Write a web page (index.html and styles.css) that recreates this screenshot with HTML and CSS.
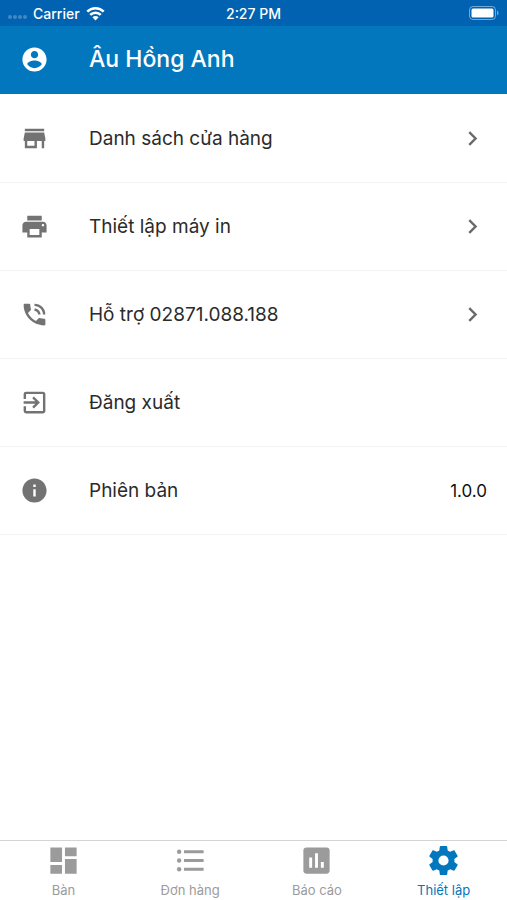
FILE: index.html
```html
<!DOCTYPE html>
<html lang="vi">
<head>
<meta charset="utf-8">
<meta name="viewport" content="width=device-width, initial-scale=1">
<title>Thiết lập</title>
<link rel="stylesheet" href="styles.css">
</head>
<body>
<div class="status-bar">
  <div class="carrier">
    <span class="signal"><i></i><i></i><i></i><i></i></span>
    <span>Carrier</span>
    <svg class="wifi" viewBox="0 0 18 14" aria-hidden="true"><path d="M1.2 5.2a11 11 0 0 1 15.6 0M4 8.3a7 7 0 0 1 10 0" fill="none" stroke="currentColor" stroke-width="2.4"/><path d="M9 13.6L6.1 10.6a4.1 4.1 0 0 1 5.8 0z" fill="currentColor"/></svg>
  </div>
  <time>2:27 PM</time>
  <div class="battery">
    <svg viewBox="0 0 30 14" aria-hidden="true"><rect x=".5" y=".5" width="26" height="13" rx="3.5" fill="none" stroke="currentColor" opacity=".45"/><rect x="2.5" y="2.5" width="22" height="9" rx="1.5" fill="currentColor"/><path d="M28 4.5q1.6.9 1.6 2.5T28 9.500z" fill="currentColor" opacity=".45"/></svg>
  </div>
</div>
<header class="header">
  <svg class="icon" viewBox="0 0 24 24" aria-hidden="true"><path d="M12 2C6.480 2 2 6.480 2 12s4.480 10 10 10 10-4.480 10-10S17.520 2 12 2zm0 3c1.660 0 3 1.340 3 3s-1.340 3-3 3-3-1.340-3-3 1.340-3 3-3zm0 14.200c-2.500 0-4.710-1.280-6-3.220.03-1.990 4-3.080 6-3.080 1.990 0 5.970 1.090 6 3.080-1.290 1.940-3.500 3.220-6 3.220z"/></svg>
  <h1>Âu Hồng Anh</h1>
</header>
<main class="list">
  <a class="row" href="#stores">
    <svg class="icon" viewBox="0 0 24 24" aria-hidden="true"><path d="M20 4H4v2h16V4zm1 10v-2l-1-5H4l-1 5v2h1v6h10v-6h4v6h2v-6h1zm-9 4H6v-4h6v4z"/></svg>
    <span class="label">Danh sách cửa hàng</span>
    <svg class="chevron" viewBox="0 0 24 24" aria-hidden="true"><path d="M10 6L8.590 7.410 13.170 12l-4.580 4.590L10 18l6-6z"/></svg>
  </a>
  <a class="row" href="#printer">
    <svg class="icon" viewBox="0 0 24 24" aria-hidden="true"><path d="M19 8H5c-1.660 0-3 1.340-3 3v6h4v4h12v-4h4v-6c0-1.660-1.340-3-3-3zm-3 11H8v-5h8v5zm3-7c-.55 0-1-.45-1-1s.45-1 1-1 1 .45 1 1-.45 1-1 1zm-1-9H6v4h12V3z"/></svg>
    <span class="label">Thiết lập máy in</span>
    <svg class="chevron" viewBox="0 0 24 24" aria-hidden="true"><path d="M10 6L8.590 7.410 13.170 12l-4.580 4.590L10 18l6-6z"/></svg>
  </a>
  <a class="row" href="tel:02871088188">
    <svg class="icon" viewBox="0 0 24 24" aria-hidden="true"><path d="M20 15.500c-1.250 0-2.450-.2-3.570-.57a1.020 1.020 0 0 0-1.020.24l-2.200 2.200a15.045 15.045 0 0 1-6.590-6.590l2.200-2.210c.28-.26.36-.65.25-1C8.700 6.450 8.500 5.250 8.500 4c0-.55-.45-1-1-1H4c-.55 0-1 .45-1 1 0 9.390 7.610 17 17 17 .55 0 1-.45 1-1v-3.500c0-.55-.45-1-1-1zM19 12h2a9 9 0 0 0-9-9v2c3.870 0 7 3.130 7 7zm-4 0h2c0-2.760-2.240-5-5-5v2c1.660 0 3 1.340 3 3z"/></svg>
    <span class="label">Hỗ trợ 02871.088.188</span>
    <svg class="chevron" viewBox="0 0 24 24" aria-hidden="true"><path d="M10 6L8.590 7.410 13.170 12l-4.580 4.590L10 18l6-6z"/></svg>
  </a>
  <button class="row" type="button">
    <svg class="icon" viewBox="0 0 24 24" aria-hidden="true"><path d="M10.090 15.590L11.500 17l5-5-5-5-1.410 1.410L12.670 11H3v2h9.670l-2.580 2.590zM19 3H5a2 2 0 0 0-2 2v4h2V5h14v14H5v-4H3v4a2 2 0 0 0 2 2h14c1.100 0 2-.9 2-2V5c0-1.100-.9-2-2-2z"/></svg>
    <span class="label">Đăng xuất</span>
  </button>
  <div class="row">
    <svg class="icon" viewBox="0 0 24 24" aria-hidden="true"><path d="M12 2C6.480 2 2 6.480 2 12s4.480 10 10 10 10-4.480 10-10S17.520 2 12 2zm1 15h-2v-6h2v6zm0-8h-2V7h2v2z"/></svg>
    <span class="label">Phiên bản</span>
    <span class="value">1.0.0</span>
  </div>
</main>
<nav class="tabs">
  <a class="tab" href="#tables">
    <svg viewBox="0 0 24 24" aria-hidden="true"><path d="M3 13h8V3H3v10zm0 8h8v-6H3v6zm10 0h8V11h-8v10zm0-18v6h8V3h-8z"/></svg>
    <span>Bàn</span>
  </a>
  <a class="tab" href="#orders">
    <svg viewBox="0 0 24 24" aria-hidden="true"><circle cx="4.200" cy="6" r="1.500"/><circle cx="4.200" cy="12" r="1.500"/><circle cx="4.200" cy="18" r="1.500"/><path d="M7.500 5h13.500v2H7.500zM7.500 11h13.500v2H7.500zM7.500 17h13.500v2H7.500z"/></svg>
    <span>Đơn hàng</span>
  </a>
  <a class="tab" href="#reports">
    <svg viewBox="0 0 24 24" aria-hidden="true"><path d="M19 3H5c-1.100 0-2 .9-2 2v14c0 1.100.9 2 2 2h14c1.100 0 2-.9 2-2V5c0-1.100-.9-2-2-2zM9 17H7v-7h2v7zm4 0h-2V7h2v10zm4 0h-2v-4h2v4z"/></svg>
    <span>Báo cáo</span>
  </a>
  <a class="tab active" href="#settings" aria-current="page">
    <svg viewBox="0 0 24 24" aria-hidden="true"><path d="M12 15.500A3.500 3.500 0 0 1 8.500 12 3.500 3.500 0 0 1 12 8.500a3.500 3.500 0 0 1 3.500 3.500 3.500 3.500 0 0 1-3.500 3.500m7.430-2.530c.04-.32.07-.64.07-.97s-.03-.66-.07-1l2.110-1.630c.19-.15.24-.42.12-.64l-2-3.460c-.12-.22-.39-.31-.61-.22l-2.490 1c-.52-.39-1.060-.73-1.690-.98l-.37-2.650A.506.506 0 0 0 14 2h-4c-.25 0-.46.18-.5.42l-.37 2.650c-.63.25-1.170.59-1.690.98l-2.490-1c-.22-.09-.49 0-.61.22l-2 3.460c-.13.22-.07.49.12.64L4.570 11c-.04.34-.07.67-.07 1s.03.65.07.97l-2.110 1.660c-.19.15-.25.42-.12.64l2 3.460c.12.22.39.3.61.22l2.490-1.010c.52.4 1.060.74 1.690.99l.37 2.650c.04.24.25.42.5.42h4c.25 0 .46-.18.5-.42l.37-2.650c.63-.26 1.170-.59 1.690-.99l2.490 1.010c.22.08.49 0 .61-.22l2-3.460c.12-.22.07-.49-.12-.64z"/></svg>
    <span>Thiết lập</span>
  </a>
</nav>
</body>
</html>
```
FILE: styles.css
```css
* {
  box-sizing: border-box;
}

body {
  margin: 0;
  min-height: 100vh;
  display: flex;
  flex-direction: column;
  background: #fff;
  color: #2b2b2b;
  font-family: Inter, "Liberation Sans", sans-serif;
}

svg {
  display: block;
  flex: none;
  fill: currentColor;
}

.status-bar {
  height: 26px;
  padding: 0 8px;
  display: grid;
  grid-template-columns: 1fr auto 1fr;
  align-items: center;
  background: #0062b0;
  color: #fff;
  font-size: 14px;
  font-weight: 500;
}

.carrier {
  display: flex;
  align-items: center;
  gap: 6px;
}

.signal {
  display: flex;
  gap: 1px;
  padding-top: 8px;
}

.signal i {
  width: 4px;
  height: 4px;
  border-radius: 2px;
  background: #fff;
  opacity: 0.25;
}

.wifi {
  width: 19px;
  height: 15px;
}

.battery {
  justify-self: end;
}

.battery svg {
  width: 30px;
  height: 14px;
}

.header {
  height: 68px;
  padding: 0 20px 2px;
  display: flex;
  align-items: center;
  gap: 40px;
  background: #0277bd;
  color: #fff;
}

.header h1 {
  margin: 0;
  font-size: 23px;
  font-weight: 500;
}

.icon,
.chevron {
  width: 29px;
  height: 29px;
}

.list {
  flex: 1;
  padding-top: 1px;
}

.row {
  width: 100%;
  min-height: 88px;
  padding: 0 20px;
  display: flex;
  align-items: center;
  gap: 40px;
  border: 0;
  border-bottom: 1px solid #f2f2f2;
  background: none;
  color: inherit;
  font: inherit;
  text-align: left;
  text-decoration: none;
}

.row .icon {
  color: #737373;
}

.chevron {
  color: #6b6b6b;
}

.label {
  flex: 1;
  font-size: 19px;
}

.value {
  font-size: 17px;
  color: #111;
}

.tabs {
  height: 60px;
  display: grid;
  grid-template-columns: repeat(4, 1fr);
  border-top: 1px solid #d4d4d4;
}

.tab {
  padding-top: 2px;
  display: flex;
  flex-direction: column;
  align-items: center;
  gap: 4px;
  color: #9b9b9b;
  font-size: 13px;
  line-height: 16px;
  text-decoration: none;
}

.tab svg {
  width: 35px;
  height: 35px;
}

.tab.active {
  color: #0277bd;
}
```
